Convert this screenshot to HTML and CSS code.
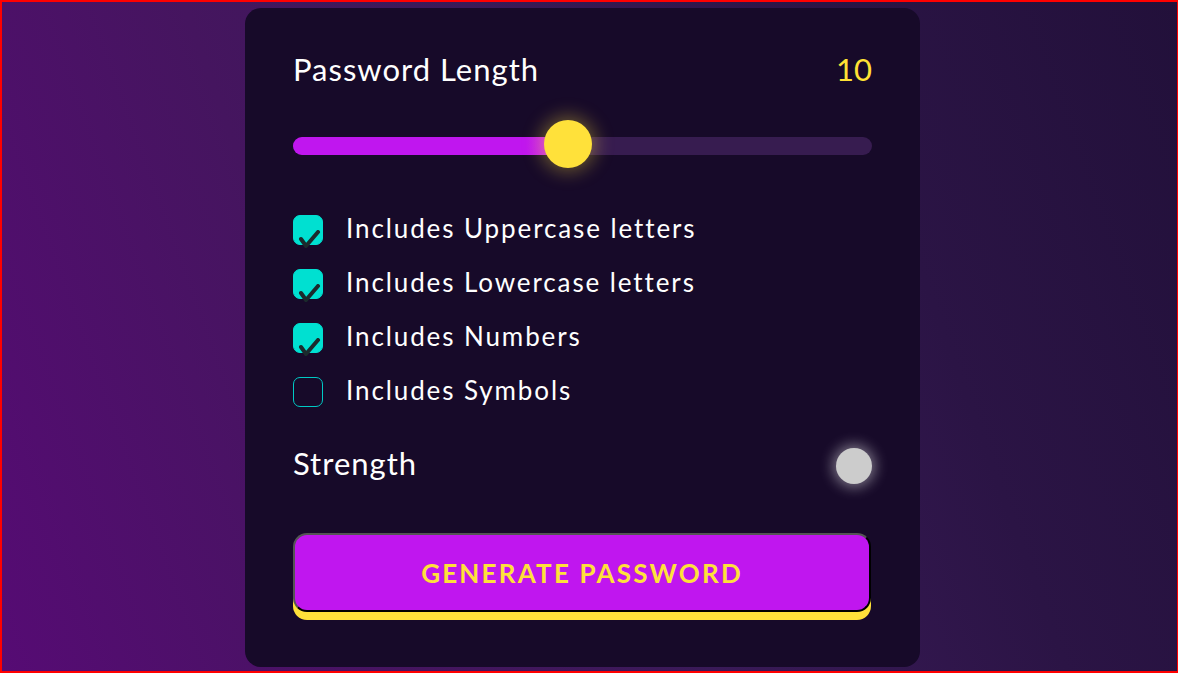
FILE: index.html
```html
<!DOCTYPE html>
<html lang="en">
<head>
<meta charset="utf-8">
<title>Password Generator</title>
<link rel="stylesheet" href="styles.css">
</head>
<body>
<main class="card">
  <div class="head-row">
    <span class="title">Password Length</span>
    <span class="length-value">10</span>
  </div>
  <div class="slider">
    <div class="slider-fill" style="width:47.5%"></div>
    <div class="slider-thumb" style="left:47.5%"></div>
  </div>
  <ul class="options">
    <li class="option">
      <span class="box checked"><svg class="tick" viewBox="0 0 24 20" width="24" height="20"><path d="M3 9 L8 16 L20 2" /></svg></span>
      <span class="option-label">Includes Uppercase letters</span>
    </li>
    <li class="option">
      <span class="box checked"><svg class="tick" viewBox="0 0 24 20" width="24" height="20"><path d="M3 9 L8 16 L20 2" /></svg></span>
      <span class="option-label">Includes Lowercase letters</span>
    </li>
    <li class="option">
      <span class="box checked"><svg class="tick" viewBox="0 0 24 20" width="24" height="20"><path d="M3 9 L8 16 L20 2" /></svg></span>
      <span class="option-label">Includes Numbers</span>
    </li>
    <li class="option">
      <span class="box"></span>
      <span class="option-label">Includes Symbols</span>
    </li>
  </ul>
  <div class="strength-row">
    <span class="title strength-title">Strength</span>
    <span class="strength-dot"></span>
  </div>
  <button class="generate" type="button">GENERATE PASSWORD</button>
</main>
</body>
</html>
```
FILE: styles.css
```css
* { box-sizing: border-box; }
html { height: 100%; }
body {
  margin: 0;
  height: 100%;
  border-style: solid;
  border-color: #ff0000;
  border-width: 2px 1px 2px 2px;
  background: linear-gradient(70deg, #560b74 0%, #45155f 30%, #3a1a58 50%, #2b1445 75%, #22103a 100%);
  font-family: "Lato", "Liberation Sans", sans-serif;
  color: #ffffff;
  padding-top: 6px;
  overflow: hidden;
}
.card {
  margin-left: 243px;
  width: 675px;
  height: 659px;
  background: #170a29;
  border-radius: 16px;
  padding: 41px 48px 0 48px;
}
.head-row, .strength-row {
  display: flex;
  justify-content: space-between;
  align-items: center;
}
.title {
  font-size: 31px;
  line-height: 40px;
  font-weight: 400;
  letter-spacing: 1px;
}
.length-value {
  font-size: 31px;
  line-height: 40px;
  color: #ffe135;
}
.slider {
  position: relative;
  margin-top: 48px;
  height: 18px;
  border-radius: 9px;
  background: #371c50;
}
.slider-fill {
  height: 100%;
  border-radius: 9px 0 0 9px;
  background: linear-gradient(90deg, #c016ef 0%, #c016ef 85%, #d43ad6 100%);
}
.slider-thumb {
  position: absolute;
  top: -17px;
  width: 48px;
  height: 48px;
  margin-left: -24px;
  border-radius: 50%;
  background: #ffe13a;
  box-shadow: 0 0 18px 4px rgba(255, 225, 58, 0.35);
}
.options {
  list-style: none;
  margin: 60px 0 0 0;
  padding: 0;
  display: flex;
  flex-direction: column;
  gap: 24px;
}
.option {
  display: flex;
  align-items: center;
  gap: 23px;
  height: 30px;
}
.box {
  position: relative;
  width: 30px;
  height: 30px;
  flex: none;
  border-radius: 7px;
  border: 1px solid #00c9c4;
}
.box.checked {
  background: #00e0d1;
  border-color: #00e0d1;
}
.tick {
  position: absolute;
  left: 4px;
  top: 14px;
  fill: none;
  stroke: #1b2a2c;
  stroke-width: 4;
  stroke-linecap: round;
  stroke-linejoin: round;
}
.option-label {
  font-size: 26px;
  line-height: 30px;
  letter-spacing: 1.9px;
  padding-bottom: 5px;
}
.strength-row {
  margin-top: 39px;
  height: 40px;
}
.strength-title {
  line-height: 35px;
  padding-bottom: 5px;
}
.strength-dot {
  width: 36px;
  height: 36px;
  border-radius: 50%;
  background: #cccccc;
  box-shadow: 0 0 14px 3px rgba(255, 255, 255, 0.45);
}
.generate {
  display: block;
  margin-top: 47px;
  width: 578px;
  height: 79px;
  border-radius: 14px;
  border-width: 2px;
  border-style: solid;
  border-color: #555555 #000000 #000000 #555555;
  background: #c016ef;
  box-shadow: 0 8px 0 #ffe13a;
  color: #ffe13a;
  font-family: "Lato", "Liberation Sans", sans-serif;
  font-weight: 700;
  font-size: 26px;
  letter-spacing: 2.2px;
  padding: 0;
}
```
